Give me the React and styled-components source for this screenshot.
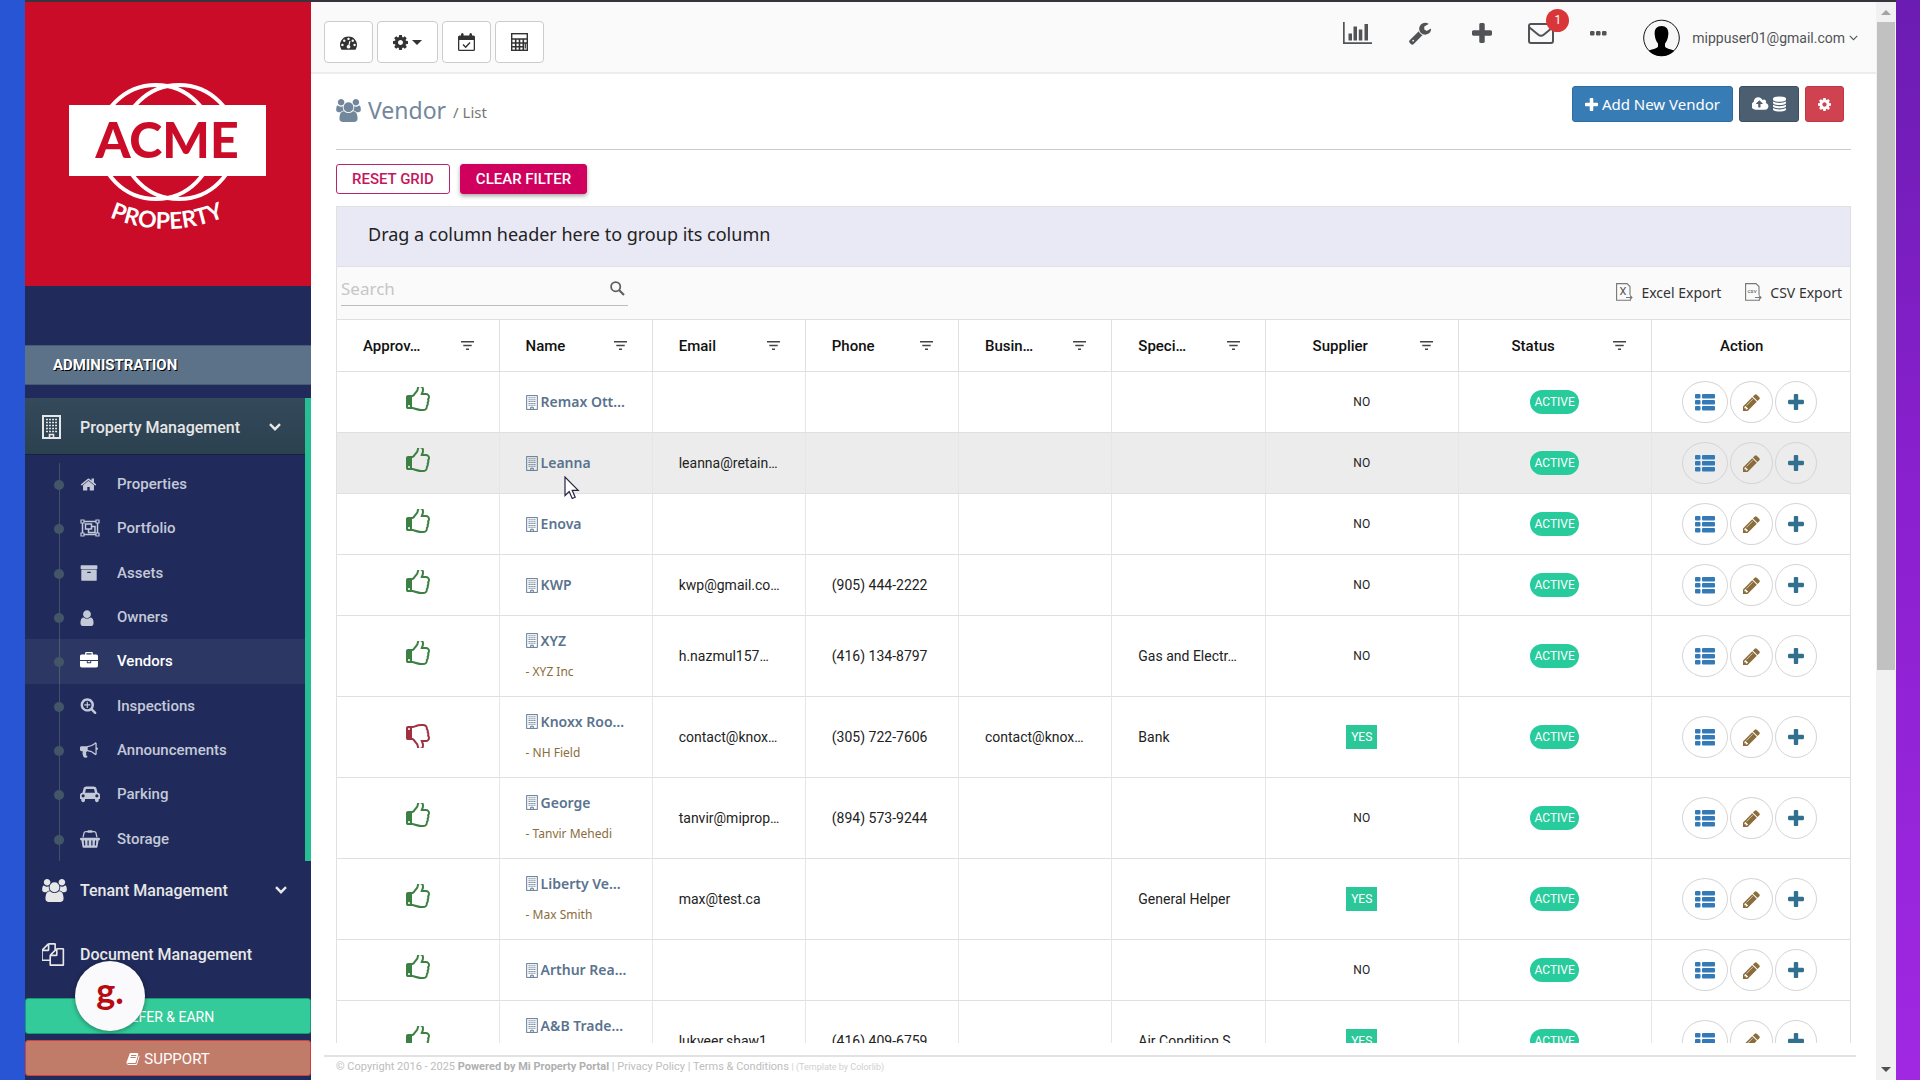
import styled, { createGlobalStyle } from "styled-components";

const GlobalStyle = createGlobalStyle`
  * {
    box-sizing: border-box;
  }
  body {
    margin: 0;
    font-family: Roboto, "Liberation Sans", sans-serif;
    font-size: 14px;
    color: #333;
    overflow: hidden;
  }
  button, input {
    font: inherit;
  }
  a {
    color: inherit;
    text-decoration: none;
  }
  svg {
    display: block;
    flex: none;
  }
`;

const humanist = `"Noto Sans", "Open Sans", sans-serif`;

const Desktop = styled.div`
  height: 100vh;
  padding: 0 24px 0 25px;
  background: linear-gradient(to bottom, #6b1cb2, #8a20cf 45%, #a028e2) right / 50% 100% no-repeat, #2855d3;
`;

const Window = styled.div`
  height: 100%;
  display: flex;
  border-top: 2px solid #38343c;
  background: #fff;
`;

/* ---------- sidebar ---------- */

const Sidebar = styled.aside`
  position: relative;
  width: 286px;
  flex: none;
  display: flex;
  flex-direction: column;
  background: #202b5b;
  color: #e7e7e7;
`;

const LogoPanel = styled.div`
  height: 284px;
  margin-bottom: 59px;
  background: #cb0c28;
`;

const SectionTitle = styled.h3`
  margin: 0 0 13px;
  padding: 1px 28px 0;
  line-height: 37px;
  border-top: 1px solid #49597a;
  border-bottom: 1px solid #49597a;
  background: #5b7289;
  color: #fff;
  font-size: 15px;
  font-weight: 700;
  text-shadow: 1px 1px #000;
`;

const OpenGroup = styled.div`
  border-right: 6px solid #26bf94;
`;

const MenuLink = styled.a`
  display: flex;
  align-items: center;
  height: ${(p) => (p.$active ? "57px" : "64px")};
  padding: ${(p) => (p.$active ? "2px 24px 0 17px" : "0 24px 6px 17px")};
  font-size: 16px;
  font-weight: 500;
  background: ${(p) => (p.$active ? "linear-gradient(#34495a, #2b4150)" : "none")};
  border-bottom: ${(p) => (p.$active ? "1px solid #17233d" : "none")};
  span {
    flex: 1;
    margin-left: 12px;
  }
`;

const IconSlot = styled.i`
  width: 26px;
  flex: none;
  display: flex;
`;

const SubMenu = styled.ul`
  display: grid;
  grid-auto-rows: 1fr;
  min-height: 406px;
  margin: 0;
  padding: 7px 0 0;
  list-style: none;
  background: linear-gradient(#425166, #425166) 34px 8px / 1px 100% no-repeat;
`;

const SubItem = styled.li`
  display: flex;
  align-items: center;
  padding-left: 29px;
  background: ${(p) => (p.$current ? "rgba(255, 255, 255, 0.06)" : "none")};
  color: ${(p) => (p.$current ? "#fff" : "#c4c9d8")};
  font-size: 15px;
  font-weight: 500;
  &::before {
    content: "";
    width: 10px;
    height: 10px;
    margin-top: 2px;
    border-radius: 50%;
    background: #425668;
  }
  a {
    display: flex;
    align-items: center;
    margin-left: 16px;
  }
`;

const SubIcon = styled.i`
  width: 37px;
`;

const SideButtons = styled.div`
  margin-top: auto;
  padding-bottom: 4px;
  display: grid;
  gap: 6px;
`;

const SideButton = styled.button`
  display: flex;
  align-items: center;
  justify-content: center;
  gap: 4px;
  height: 36px;
  padding: 2px 0 0;
  border: 1px solid ${(p) => (p.$kind === "support" ? "#d1403f" : "#169f73")};
  border-radius: 3px;
  background: ${(p) => (p.$kind === "support" ? "#c17b69" : "#33cb99")};
  color: #fff;
  font-size: ${(p) => (p.$kind === "support" ? "15px" : "14px")};
`;

const HelpBubble = styled.button`
  position: absolute;
  left: 50px;
  bottom: 49px;
  width: 70px;
  height: 70px;
  padding: 0 0 12px;
  border: none;
  border-radius: 50%;
  background: #fafafc;
  box-shadow: 0 1px 5px rgba(0, 0, 0, 0.4);
  color: #b80a10;
  font: 700 36px/50px Lato, sans-serif;
`;

/* ---------- main column ---------- */

const Main = styled.main`
  flex: 1;
  min-width: 0;
  display: flex;
  flex-direction: column;
`;

const TopBar = styled.header`
  height: 72px;
  flex: none;
  display: flex;
  justify-content: space-between;
  padding: 0 18px 0 13px;
  background: #fafafa;
  border-bottom: 2px solid #ececec;
`;

const ToolButtons = styled.div`
  display: flex;
  gap: 4px;
  padding-top: 19px;
`;

const ToolButton = styled.button`
  display: flex;
  align-items: center;
  justify-content: center;
  gap: 4px;
  height: 42px;
  padding: 0 15px;
  border: 1px solid #ccc;
  border-radius: 4px;
  background: #fff;
  color: #333;
`;

const Caret = styled.span`
  border: 5px solid transparent;
  border-top-color: currentColor;
  border-bottom: 0;
`;

const UserNav = styled.nav`
  display: flex;
  align-items: center;
  padding-bottom: 8px;
  color: #515356;
  a {
    display: flex;
    align-items: center;
  }
`;

const NavIcon = styled.a`
  position: relative;
  margin-right: ${(p) => p.$gap || 36}px;
`;

const Badge = styled.span`
  position: absolute;
  top: -14px;
  right: -15px;
  width: 23px;
  line-height: 23px;
  border-radius: 50%;
  background: #d9363a;
  color: #fff;
  font-size: 12px;
  text-align: center;
`;

const Account = styled.a`
  gap: 4px;
  padding-top: 9px;
  font-size: 14px;
  svg:first-child {
    margin-right: 8px;
  }
`;

const Content = styled.section`
  flex: 1;
  min-height: 0;
  display: flex;
  flex-direction: column;
  padding: 0 25px;
`;

const TitleRow = styled.div`
  height: 76px;
  flex: none;
  display: flex;
  align-items: flex-start;
  justify-content: space-between;
  padding: 12px 7px 0 0;
  border-bottom: 1px solid #ccc;
`;

const Title = styled.h1`
  display: flex;
  align-items: center;
  gap: 7px;
  margin: 3px 0 0;
  color: #73879c;
  font: 400 23px/38px ${humanist};
  small {
    padding-top: 4px;
    color: #777;
    font-size: 15px;
  }
`;

const Actions = styled.div`
  display: flex;
  gap: 6px;
`;

const ActionButton = styled.button`
  display: flex;
  align-items: center;
  gap: 4px;
  height: 36px;
  padding: 0 12px;
  border: 1px solid ${(p) => p.$edge};
  border-radius: 3px;
  background: ${(p) => p.$bg};
  color: #fff;
  font: 400 15px ${humanist};
`;

const FilterRow = styled.div`
  display: flex;
  gap: 10px;
  padding: 14px 0 12px;
`;

const FilterButton = styled.button`
  height: 30px;
  padding: 0 15px;
  border: 1px solid ${(p) => (p.$filled ? "#d0005e" : "#b5266c")};
  border-radius: 3px;
  background: ${(p) => (p.$filled ? "#d0005e" : "#fff")};
  color: ${(p) => (p.$filled ? "#fff" : "#c2185b")};
  box-shadow: ${(p) => (p.$filled ? "0 2px 4px rgba(0, 0, 0, 0.35)" : "none")};
  font-size: 15px;
  font-weight: 500;
`;

const Grid = styled.div`
  flex: 1;
  min-height: 0;
  overflow: hidden;
  border: 1px solid #e0e0e0;
  border-bottom: 0;
`;

const GroupDrop = styled.div`
  height: 60px;
  padding: 0 31px;
  background: #e9e9f5;
  border-bottom: 1px solid #e0e0e0;
  color: #222;
  font: 400 18px/54px ${humanist};
`;

const GridTools = styled.div`
  height: 52px;
  display: flex;
  align-items: center;
  gap: 24px;
  padding: 0 8px 2px 4px;
  background: #fafafa;
`;

const Search = styled.label`
  width: 287px;
  height: 38px;
  margin-right: auto;
  margin-bottom: 10px;
  display: flex;
  align-items: center;
  padding: 4px 3px 0 0;
  border-bottom: 1px solid #bdbdbd;
  color: #616161;
  input {
    flex: 1;
    min-width: 0;
    padding: 0;
    border: 0;
    outline: none;
    background: none;
    font: 400 17px ${humanist};
    &::placeholder {
      color: #c6c6c6;
    }
  }
`;

const ExportButton = styled.button`
  display: flex;
  align-items: center;
  gap: 8px;
  padding: 0;
  border: 0;
  background: none;
  color: #333;
  font: 400 14px ${humanist};
`;

const Table = styled.table`
  width: 100%;
  table-layout: fixed;
  border-collapse: separate;
  border-spacing: 0;
  border-top: 1px solid #e0e0e0;
`;

const Th = styled.th`
  height: 52px;
  padding: 0 ${(p) => (p.$plain ? 44 : 25)}px 0 26px;
  border-bottom: 1px solid #e0e0e0;
  border-left: 1px solid #e0e0e0;
  color: #111;
  font-size: 15px;
  font-weight: 500;
  text-align: ${(p) => (p.$center ? "center" : "left")};
  &:first-child {
    border-left: 0;
  }
`;

const HeadCell = styled.div`
  display: flex;
  align-items: center;
  span {
    flex: 1;
    padding-right: ${(p) => (p.$center ? 31 : 0)}px;
    white-space: nowrap;
  }
`;

const Row = styled.tr`
  background: ${(p) => (p.$hover ? "#ececec" : "#fff")};
`;

const Td = styled.td`
  height: ${(p) => (p.$tall ? 81 : 61)}px;
  padding: 0 0 0 ${(p) => (p.$center ? 0 : 26)}px;
  border-bottom: 1px solid #e0e0e0;
  border-left: 1px solid #e6e6e6;
  color: #222;
  white-space: nowrap;
  text-align: ${(p) => (p.$center ? "center" : "left")};
  &:first-child {
    border-left: 0;
  }
`;

const Approval = styled.div`
  display: flex;
  justify-content: center;
  padding-bottom: 5px;
  color: ${(p) => (p.$ok ? "#3c8143" : "#a03141")};
`;

const VendorName = styled.a`
  display: flex;
  align-items: center;
  gap: 3px;
  && {
    color: #5a738e;
  }
  font: 600 14px/20px ${humanist};
`;

const Company = styled.div`
  height: 31px;
  padding-top: 11px;
  color: #8a6d3b;
  font: 400 12px/20px ${humanist};
`;

const Supplier = styled.span`
  display: inline-block;
  padding: 0 5px;
  line-height: 24px;
  font-size: 12px;
  background: ${(p) => (p.$yes ? "#2bc798" : "none")};
  color: ${(p) => (p.$yes ? "#fff" : "#222")};
`;

const Status = styled.span`
  display: inline-block;
  padding: 0 4px;
  border-radius: 12px;
  background: #28cb9b;
  color: #fff;
  font-size: 12px;
  line-height: 24px;
`;

const RowActions = styled.div`
  display: flex;
  justify-content: center;
  gap: 2px;
  padding-right: 3px;
`;

const RoundButton = styled.button`
  display: flex;
  align-items: center;
  height: 42px;
  padding: 0 12px;
  border: 1px solid #d5d5d5;
  border-radius: 50%;
  background: none;
  color: ${(p) => p.$color};
`;

const Footer = styled.footer`
  margin: 12px 20px 0 13px;
  padding: 1px 12px 0;
  height: 25px;
  border-top: 2px solid #e2e2e2;
  color: #bdbdbd;
  font-size: 11px;
  line-height: 18px;
  b {
    color: #b0b0b0;
  }
  small {
    font-size: 9px;
    color: #d0d0d0;
  }
`;

/* ---------- window scroll bar ---------- */

const ScrollTrack = styled.div`
  width: 20px;
  flex: none;
  display: flex;
  flex-direction: column;
  align-items: center;
  padding: 8px 1px;
  background: #f1f1f1;
`;

const Arrow = styled.span`
  border: 5px solid transparent;
  ${(p) => (p.$down ? "border-top-color: #505050; border-bottom: 0;" : "border-bottom-color: #a3a3a3; border-top: 0;")}
`;

const Thumb = styled.div`
  width: 18px;
  height: 61%;
  margin: 7px 0 auto;
  background: #c1c1c1;
`;

const Pointer = styled.svg`
  position: absolute;
  left: 564px;
  top: 476px;
`;

/* ---------- icons ---------- */

const glyphs = {
  thumb:
    "M384 1344q0-26-19-45t-45-19-45 19-19 45 19 45 45 19 45-19 19-45zm1152-576q0-51-39-89.5t-89-38.5h-352q0-58 48-159.5t48-160.5q0-98-32-145t-128-47q-26 26-38 85t-30.5 125.5-59.5 109.5q-22 23-77 91-4 5-23 30t-31.5 41-34.5 42.5-40 44-38.5 35.5-40 27-35.5 9h-32v640h32q13 0 31.5 3t33 6.5 38 11 35 11.5 35.5 12.5 29 10.5q211 73 342 73h121q192 0 192-167 0-26-5-56 30-16 47.5-52.5t17.5-73.5-18-69q53-50 53-119 0-25-10-55.5t-25-47.5q32-1 53.5-47t21.5-81zm128-1q0 89-49 163 9 33 9 69 0 77-38 144 3 21 3 43 0 101-60 178 1 139-85 219.5t-227 80.5h-129q-96 0-189.5-22.5t-216.5-65.5q-116-40-138-40h-288q-53 0-90.5-37.5t-37.5-90.5v-640q0-53 37.5-90.5t90.5-37.5h274q36-24 137-155 58-75 107-128 24-25 35.5-85.5t30.5-126.5 62-108q39-37 90-37 84 0 151 32.5t102 101.5 35 186q0 93-48 192h176q104 0 180 76t76 179z",
  users:
    "M593 896q-162 5-265 128h-134q-82 0-138-40.5t-56-118.5q0-353 124-353 6 0 43.5 21t97.5 42.5 119 21.5q67 0 133-23-5 37-5 66 0 139 81 256zm1071 637q0 120-73 189.5t-194 69.5h-874q-121 0-194-69.5t-73-189.5q0-53 3.5-103.5t14-109 26.5-108.5 43-97.5 62-81 85.5-53.5 111.5-20q10 0 43 21.5t73 48 107 48 135 21.5 135-21.5 107-48 73-48 43-21.5q61 0 111.500 20t85.500 53.500 62 81 43 97.500 26.500 108.500 14 109 3.500 103.500zm-1024-1277q0 106-75 181t-181 75-181-75-75-181 75-181 181-75 181 75 75 181zm704 384q0 159-112.500 271.500t-271.500 112.500-271.500-112.500-112.500-271.500 112.500-271.500 271.500-112.500 271.500 112.500 112.500 271.500zm576 225q0 78-56 118.500t-138 40.500h-134q-103-123-265-128 81-117 81-256 0-29-5-66 66 23 133 23 59 0 119-21.500t97.500-42.500 43.500-21q124 0 124 353zm-128-609q0 106-75 181t-181 75-181-75-75-181 75-181 181-75 181 75 75 181z",
  cog: "M1152 896q0-106-75-181t-181-75-181 75-75 181 75 181 181 75 181-75 75-181zm512-109v222q0 12-8 23t-20 13l-185 28q-19 54-39 91 35 50 107 138 10 12 10 25t-9 23q-27 37-99 108t-94 71q-12 0-26-9l-138-108q-44 23-91 38-16 136-29 186-7 28-36 28h-222q-14 0-24.5-8.5t-11.5-21.5l-28-184q-49-16-90-37l-141 107q-10 9-25 9-14 0-25-11-126-114-165-168-7-10-7-23 0-12 8-23 15-21 51-66.5t54-70.5q-27-50-41-99l-183-27q-13-2-21-12.5t-8-23.5v-222q0-12 8-23t19-13l186-28q14-46 39-92-40-57-107-138-10-12-10-24 0-10 9-23 26-36 98.5-107.5t94.5-71.5q13 0 26 10l138 107q44-23 91-38 16-136 29-186 7-28 36-28h222q14 0 24.5 8.5t11.5 21.5l28 184q49 16 90 37l142-107q9-9 24-9 13 0 25 10 129 119 165 170 7 8 7 22 0 12-8 23-15 21-51 66.5t-54 70.5q26 50 41 98l183 28q13 2 21 12.5t8 23.5z",
  plus: "M1600 736v192q0 40-28 68t-68 28h-416v416q0 40-28 68t-68 28h-192q-40 0-68-28t-28-68v-416h-416q-40 0-68-28t-28-68v-192q0-40 28-68t68-28h416v-416q0-40 28-68t68-28h192q40 0 68 28t28 68v416h416q40 0 68 28t28 68z",
  pencil:
    "M491 1536l91-91-235-235-91 91v107h128v128h107zm523-928q0-22-22-22-10 0-17 7l-542 542q-7 7-7 17 0 22 22 22 10 0 17-7l542-542q7-7 7-17zm-54-192l416 416-832 832h-416v-416zm683 96q0 53-37 90l-166 166-416-416 166-165q36-38 90-38 53 0 91 38l235 234q37 39 37 91z",
  home: "M1472 992v480q0 26-19 45t-45 19h-384v-384h-256v384h-384q-26 0-45-19t-19-45v-480q0-1 .5-3t.5-3l575-474 575 474q1 2 1 6zm223-69l-62 74q-8 9-21 11h-3q-13 0-21-7l-692-577-692 577q-12 8-24 7-13-2-21-11l-62-74q-8-10-7-23.5t11-21.5l719-599q32-26 76-26t76 26l244 204v-195q0-14 9-23t23-9h192q14 0 23 9t9 23v408l219 182q10 8 11 21.5t-7 23.5z",
  archive:
    "M1088 832q0-26-19-45t-45-19h-256q-26 0-45 19t-19 45 19 45 45 19h256q26 0 45-19t19-45zm576-192v960q0 26-19 45t-45 19h-1408q-26 0-45-19t-19-45v-960q0-26 19-45t45-19h1408q26 0 45 19t19 45zm64-448v256q0 26-19 45t-45 19h-1536q-26 0-45-19t-19-45v-256q0-26 19-45t45-19h1536q26 0 45 19t19 45z",
  user: "M1536 1399q0 109-62.5 187t-150.5 78h-854q-88 0-150.5-78t-62.5-187q0-85 8.5-160.5t31.5-152 58.5-131 94-89 134.5-34.5q131 128 313 128t313-128q76 0 134.5 34.5t94 89 58.5 131 31.5 152 8.5 160.5zm-256-887q0 159-112.5 271.5t-271.5 112.5-271.5-112.5-112.5-271.5 112.5-271.5 271.5-112.5 271.5 112.5 112.5 271.5z",
  briefcase:
    "M640 256h512v-128h-512v128zm1152 640v480q0 66-47 113t-113 47h-1472q-66 0-113-47t-47-113v-480h672v160q0 26 19 45t45 19h320q26 0 45-19t19-45v-160h672zm-768 0v128h-256v-128h256zm768-480v384h-1792v-384q0-66 47-113t113-47h352v-160q0-40 28-68t68-28h576q40 0 68 28t28 68v160h352q66 0 113 47t47 113z",
  zoom: "M1088 800v64q0 13-9.5 22.5t-22.5 9.5h-224v224q0 13-9.5 22.5t-22.5 9.5h-64q-13 0-22.5-9.5t-9.5-22.5v-224h-224q-13 0-22.5-9.5t-9.5-22.5v-64q0-13 9.5-22.5t22.5-9.5h224v-224q0-13 9.5-22.5t22.5-9.5h64q13 0 22.5 9.5t9.5 22.5v224h224q13 0 22.5 9.5t9.5 22.5zm128 32q0-185-131.5-316.5t-316.5-131.5-316.5 131.5-131.5 316.5 131.5 316.5 316.5 131.5 316.5-131.5 131.5-316.5zm512 832q0 53-37.5 90.5t-90.5 37.5q-54 0-90-38l-343-342q-179 124-399 124-143 0-273.5-55.5t-225-150-150-225-55.5-273.5 55.5-273.5 150-225 225-150 273.5-55.5 273.5 55.5 225 150 150 225 55.5 273.5q0 220-124 399l343 343q37 37 37 90z",
  bullhorn:
    "M1664 640q53 0 90.5 37.5t37.5 90.5-37.5 90.5-90.5 37.5v384q0 52-38 90t-90 38q-417-347-812-380-58 19-91 66t-31 100.5 40 92.5q-20 33-23 65.5t6 58 33.5 55 48 50 61.5 50.5q-29 58-111.5 83t-168.5 11.5-132-55.5q-7-23-29.5-87.5t-32-94.5-23-89-15-101 3.5-98.5 22-110.5h-122q-66 0-113-47t-47-113v-192q0-66 47-113t113-47h480q435 0 896-384 52 0 90 38t38 90v384zm-128 604v-954q-394 302-768 343v270q377 42 768 341z",
  car: "M480 1088q0-66-47-113t-113-47-113 47-47 113 47 113 113 47 113-47 47-113zm36-320h1016l-89-357q-2-8-14-17.5t-21-9.5h-768q-9 0-21 9.5t-14 17.5zm1372 320q0-66-47-113t-113-47-113 47-47 113 47 113 113 47 113-47 47-113zm160-96v384q0 14-9 23t-23 9h-96v128q0 80-56 136t-136 56-136-56-56-136v-128h-1024v128q0 80-56 136t-136 56-136-56-56-136v-128h-96q-14 0-23-9t-9-23v-384q0-93 65.5-158.5t158.5-65.5h28l105-419q23-94 104-157.5t179-63.5h768q98 0 179 63.5t104 157.5l105 419h28q93 0 158.5 65.5t65.5 158.5z",
  basket:
    "M1920 768q53 0 90.5 37.5t37.5 90.5-37.5 90.5-90.5 37.5h-15l-115 662q-8 46-44 76t-82 30h-1280q-46 0-82-30t-44-76l-115-662h-15q-53 0-90.5-37.5t-37.5-90.5 37.5-90.5 90.5-37.5h1792zm-1435 800q26-2 43.5-22.5t15.5-46.5l-32-416q-2-26-22.5-43.5t-46.5-15.5-43.5 22.5-15.5 46.5l32 416q2 25 20.5 42t43.5 17h5zm411-64v-416q0-26-19-45t-45-19-45 19-19 45v416q0 26 19 45t45 19 45-19 19-45zm384 0v-416q0-26-19-45t-45-19-45 19-19 45v416q0 26 19 45t45 19 45-19 19-45zm352 5l32-416q2-26-15.5-46.5t-43.5-22.5-46.5 15.5-22.5 43.5l-32 416q-2 26 15.5 46.5t43.5 22.5h5q25 0 43.5-17t20.5-42zm-1156-1217l-93 412h-132l101-441q19-88 89-143.5t160-55.5h167q0-26 19-45t45-19h384q26 0 45 19t19 45h167q90 0 160 55.5t89 143.5l101 441h-132l-93-412q-11-44-45.5-72t-79.5-28h-167q0 26-19 45t-45 19h-384q-26 0-45-19t-19-45h-167q-45 0-79.5 28t-45.5 72z",
  files:
    "M1632 384q40 0 68 28t28 68v1216q0 40-28 68t-68 28h-960q-40 0-68-28t-28-68v-288h-544q-40 0-68-28t-28-68v-672q0-40 20-88t48-76l408-408q28-28 76-48t88-20h416q40 0 68 28t28 68v328q68-40 128-40h416zm-544 213l-299 299h299v-299zm-640-384l-299 299h299v-299zm196 647l316-316v-416h-384v416q0 40-28 68t-68 28h-416v640h512v-256q0-40 20-88t48-76zm956 804v-1152h-384v416q0 40-28 68t-68 28h-416v640h896z",
  book: "M1703 478q40 57 18 129l-275 906q-19 64-76.5 107.5t-122.5 43.5h-923q-77 0-148.5-53.5t-99.5-131.5q-24-67-2-127 0-4 3-27t4-37q1-8-3-21.5t-3-19.5q2-11 8-21t16.5-23.5 16.5-23.5q23-38 45-91.5t30-91.5q3-10 .5-30t-.5-28q3-11 17-28t17-23q21-36 42-92t25-90q1-9-2.5-32t.5-28q4-13 22-30.5t22-22.5q19-26 42.5-84.5t27.5-96.5q1-8-3-25.5t-2-26.5q2-8 9-18t18-23 17-21q8-12 16.5-30.5t15-35 16-36 19.5-32 26.5-23.5 36-11.5 47.5 5.5l-1 3q38-9 51-9h761q74 0 114 56t18 130l-274 906q-36 119-71.5 153.5t-128.5 34.5h-869q-27 0-38 15-11 16-1 43 24 70 144 70h923q29 0 56-15.5t35-41.5l300-987q7-22 5-57 38 15 59 43zm-1064 2q-4 13 2 22.5t20 9.5h608q13 0 25.5-9.5t16.5-22.5l21-64q4-13-2-22.5t-20-9.5h-608q-13 0-25.5 9.5t-16.5 22.5zm-83 256q-4 13 2 22.5t20 9.5h608q13 0 25.5-9.5t16.5-22.5l21-64q4-13-2-22.5t-20-9.5h-608q-13 0-25.5 9.5t-16.5 22.5z",
  wrench:
    "M448 1472q0-26-19-45t-45-19-45 19-19 45 19 45 45 19 45-19 19-45zm644-420l-682 682q-37 37-90 37-52 0-91-37l-106-108q-38-36-38-90 0-53 38-91l681-681q39 98 114.5 173.5t173.5 114.5zm634-435q0 39-23 106-47 134-164.5 217.5t-258.5 83.5q-185 0-316.5-131.5t-131.5-316.5 131.5-316.5 316.5-131.5q58 0 121.5 16.5t107.5 46.5q16 11 16 28t-16 28l-293 169v224l193 107q5-3 79-48.5t135.5-81 70.5-35.5q15 0 23.5 10t8.5 25z",
  database:
    "M896 768q237 0 443-43t325-127v170q0 69-103 128t-280 93.5-385 34.5-385-34.5-280-93.5-103-128v-170q119 84 325 127t443 43zm0 768q237 0 443-43t325-127v170q0 69-103 128t-280 93.5-385 34.5-385-34.5-280-93.5-103-128v-170q119 84 325 127t443 43zm0-384q237 0 443-43t325-127v170q0 69-103 128t-280 93.5-385 34.5-385-34.5-280-93.5-103-128v-170q119 84 325 127t443 43zm0-1152q208 0 385 34.5t280 93.5 103 128v128q0 69-103 128t-280 93.5-385 34.5-385-34.5-280-93.5-103-128v-128q0-69 103-128t280-93.5 385-34.5z",
  cloud:
    "M1216 864q0-14-9-23l-352-352q-9-9-23-9t-23 9l-351 351q-10 12-10 24 0 14 9 23t23 9h224v352q0 13 9.5 22.5t22.5 9.5h192q13 0 22.5-9.5t9.5-22.5v-352h224q13 0 22.5-9.5t9.5-22.5zm640 288q0 159-112.5 271.5t-271.5 112.5h-1088q-185 0-316.5-131.5t-131.5-316.5q0-130 70-240t188-165q-2-30-2-43 0-212 150-362t362-150q156 0 285.5 87t188.5 231q71-62 166-62 106 0 181 75t75 181q0 76-41 138 130 31 213.5 135.5t83.5 238.5z",
  gauge:
    "M384 1152q0-53-37.5-90.5t-90.5-37.5-90.5 37.5-37.5 90.5 37.5 90.5 90.5 37.5 90.5-37.5 37.5-90.5zm192-448q0-53-37.5-90.5t-90.5-37.5-90.5 37.5-37.5 90.5 37.5 90.5 90.5 37.5 90.5-37.5 37.5-90.5zm428 481l101-382q6-26-7.5-48.5t-38.5-29.5-48 6.5-30 39.5l-101 382q-60 5-107 43.5t-63 98.5q-20 77 20 146t117 89 146-20 89-117q16-60-6-117t-72-91zm660-33q0-53-37.5-90.5t-90.5-37.5-90.5 37.5-37.5 90.5 37.5 90.5 90.5 37.5 90.5-37.5 37.5-90.5zm-640-640q0-53-37.5-90.5t-90.5-37.5-90.5 37.5-37.5 90.5 37.5 90.5 90.5 37.5 90.5-37.5 37.5-90.5zm448 192q0-53-37.5-90.5t-90.5-37.5-90.5 37.5-37.5 90.5 37.5 90.5 90.5 37.5 90.5-37.5 37.5-90.5zm320 448q0 261-141 483-19 29-54 29h-1402q-35 0-54-29-141-221-141-483 0-182 71-348t191-286 286-191 348-71 348 71 286 191 191 286 71 348z",
};

const Glyph = ({ name, w, h, box = "0 0 1792 1792", ...rest }) => (
  <svg width={w} height={h || w} viewBox={box} fill="currentColor" aria-hidden="true" {...rest}>
    <path d={glyphs[name]} />
  </svg>
);

const Building = ({ w, h, frame = 2 }) => (
  <svg width={w} height={h} viewBox="0 0 19 24" fill="none" stroke="currentColor" aria-hidden="true">
    <rect x="1" y="1" width="17" height="22" strokeWidth={frame} />
    <path d="M4 4.500h11M4 7.500h11M4 10.500h11M4 13.500h11M4 16.500h11" strokeWidth="1.700" strokeDasharray="1.900 1.130" />
    <path d="M7.500 23v-3.500h4V23" strokeWidth="1.600" />
  </svg>
);

const ObjectGroup = () => (
  <svg width="20" height="18" viewBox="0 0 20 18" fill="none" stroke="currentColor" strokeWidth="1.5" aria-hidden="true">
    <path d="M2.5 2.5h15v13h-15zM5.5 5h6v5h-6zM12 7.500h3v6H8.500V10.500" />
    <path d="M1 1h3v3H1zM16 1h3v3h-3zM1 14h3v3H1zM16 14h3v3h-3z" strokeWidth="1.2" fill="#202b5b" />
  </svg>
);

const CalendarCheck = () => (
  <svg width="17" height="18" viewBox="0 0 17 18" aria-hidden="true">
    <path fill="currentColor" d="M0 4q0-1.500 1.500-1.500H3V1.500Q3 0 4.300 0T5.600 1.500v1h5.800v-1Q11.400 0 12.700 0T14 1.500v1h1.500Q17 2.500 17 4v12.500Q17 18 15.500 18h-14Q0 18 0 16.500zM1.300 7v9.700h14.400V7z" />
    <path d="M5 11.500l2.700 2.700L12 9.500" fill="none" stroke="currentColor" strokeWidth="1.400" />
  </svg>
);

const Calculator = () => (
  <svg width="17" height="18" viewBox="0 0 17 18" fill="none" stroke="currentColor" aria-hidden="true">
    <rect x=".7" y=".7" width="15.600" height="16.600" strokeWidth="1.400" />
    <path d="M1 6h15M1 10h15M1 13.700h11" strokeWidth="1.600" />
    <path d="M4.700 6v11M8.500 6v11M12.300 6v11" strokeWidth="1.600" />
    <path d="M14.300 10v5.500" strokeWidth="1.200" />
  </svg>
);

const BarChart = () => (
  <svg width="29" height="22" viewBox="0 0 29 22" fill="currentColor" aria-hidden="true">
    <path d="M0 0h1.700v20.300H29V22H0zM5.500 11.500H9v7H5.500zM10.500 4.500H14v14h-3.500zM15.800 7.500h3.500v11h-3.500zM21.500 2H25v16.500h-3.500z" />
  </svg>
);

const Envelope = () => (
  <svg width="26" height="21" viewBox="0 0 26 21" fill="none" stroke="currentColor" strokeWidth="2" aria-hidden="true">
    <rect x="1" y="1" width="24" height="19" rx="2" />
    <path d="M1.500 4.500l8.500 7q3 2.500 6 0l8.500-7" />
  </svg>
);

const Ellipsis = () => (
  <svg width="17" height="5" viewBox="0 0 17 5" fill="currentColor" aria-hidden="true">
    <rect width="4.500" height="4.500" rx="1.200" />
    <rect x="6" width="4.500" height="4.500" rx="1.200" />
    <rect x="12" width="4.500" height="4.500" rx="1.200" />
  </svg>
);

const Avatar = () => (
  <svg width="37" height="38" viewBox="0 0 37 38" aria-hidden="true">
    <defs>
      <clipPath id="face">
        <circle cx="18.500" cy="19" r="18" />
      </clipPath>
    </defs>
    <circle cx="18.500" cy="19" r="17.800" fill="#f7f7f7" stroke="#111" />
    <path
      clipPath="url(#face)"
      d="M18.500 7c5 0 7.300 3.500 6.800 8.500-.3 4.500-1.800 7-3.300 9v3c1 3 11 2.500 13 8l-3 4H5l-3-4c2-5.500 12-5 13-8v-3c-1.500-2-3-4.500-3.300-9C11.200 10.500 13.500 7 18.500 7z"
    />
  </svg>
);

const ListIcon = () => (
  <svg width="20" height="17" viewBox="0 0 20 17" fill="currentColor" aria-hidden="true">
    {[0, 6, 12].map((y) => (
      <g key={y}>
        <rect y={y} width="5.500" height="4.500" rx="1" />
        <rect x="7" y={y} width="13" height="4.500" rx="1" />
      </g>
    ))}
  </svg>
);

const Chevron = ({ w, h, stroke }) => (
  <svg width={w} height={h} viewBox="0 0 12 8" fill="none" stroke="currentColor" strokeWidth={stroke} aria-hidden="true">
    <path d="M1 1.200l5 5 5-5" />
  </svg>
);

const FilterIcon = () => (
  <svg width="13" height="9" viewBox="0 0 13 9" fill="#444" aria-hidden="true">
    <path d="M0 0h13v1.500H0zM2.300 3.700h8.400v1.500H2.300zM5 7.400h3v1.500H5z" />
  </svg>
);

const SearchIcon = () => (
  <svg width="15" height="15" viewBox="0 0 15 15" fill="none" stroke="currentColor" aria-hidden="true">
    <circle cx="5.700" cy="5.700" r="4.600" strokeWidth="1.800" />
    <path d="M9 9l5 5" strokeWidth="2.200" />
  </svg>
);

const ExportIcon = ({ label }) => (
  <svg width="17" height="18" viewBox="0 0 17 18" fill="none" stroke="#777" aria-hidden="true">
    <path d="M15 17.300H.6V.6H11l3 3V12M10 14.500h6M14 12.500l2 2-2 2" strokeWidth="1.100" />
    <text x="7" y={label === "X" ? 12 : 10} textAnchor="middle" fill="#555" stroke="none" fontSize={label === "X" ? 11 : 6} fontFamily="Roboto">
      {label}
    </text>
  </svg>
);

const Logo = () => (
  <svg width="286" height="284" viewBox="25 2 286 284" role="img" aria-label="ACME Property">
    <g fill="none" stroke="#fff" strokeWidth="4">
      <circle cx="156" cy="142" r="57" />
      <circle cx="179" cy="142" r="57" />
    </g>
    <rect x="69" y="105" width="197" height="71" fill="#fff" />
    <text x="167" y="158" textAnchor="middle" fill="#cb0c28" fontFamily="Lato" fontWeight="900" fontSize="50">
      ACME
    </text>
    <path id="arc" d="M103 214a146 146 0 0 0 128 0" fill="none" />
    <text fill="#fff" fontFamily="Lato" fontWeight="700" fontSize="23" textAnchor="middle">
      <textPath href="#arc" startOffset="50%">
        PROPERTY
      </textPath>
    </text>
  </svg>
);

/* ---------- data ---------- */

const subItems = [
  ["Properties", <Glyph name="home" w={17} />],
  ["Portfolio", <ObjectGroup />],
  ["Assets", <Glyph name="archive" w={18} />],
  ["Owners", <Glyph name="user" w={14} h={17} box="256 0 1280 1664" />],
  ["Vendors", <Glyph name="briefcase" w={18} />],
  ["Inspections", <Glyph name="zoom" w={17} />],
  ["Announcements", <Glyph name="bullhorn" w={18} />],
  ["Parking", <Glyph name="car" w={20} h={18} box="0 0 2048 1792" />],
  ["Storage", <Glyph name="basket" w={20} h={18} box="0 0 2048 1792" />],
];

const columns = [
  { label: "Approv…", width: "10.68%" },
  { label: "Name", width: "10.12%" },
  { label: "Email", width: "10.12%" },
  { label: "Phone", width: "10.12%" },
  { label: "Busin…", width: "10.14%" },
  { label: "Speci…", width: "10.14%" },
  { label: "Supplier", width: "12.76%", center: true },
  { label: "Status", width: "12.74%", center: true },
  { label: "Action", width: "13.18%", center: true, plain: true },
];

const vendors = [
  { name: "Remax Ott…" },
  { name: "Leanna", email: "leanna@retain…", hover: true },
  { name: "Enova" },
  { name: "KWP", email: "kwp@gmail.co…", phone: "(905) 444-2222" },
  { name: "XYZ", company: "- XYZ Inc", email: "h.nazmul157…", phone: "(416) 134-8797", special: "Gas and Electr…" },
  {
    name: "Knoxx Roo…",
    company: "- NH Field",
    email: "contact@knox…",
    phone: "(305) 722-7606",
    business: "contact@knox…",
    special: "Bank",
    supplier: true,
    rejected: true,
  },
  { name: "George", company: "- Tanvir Mehedi", email: "tanvir@miprop…", phone: "(894) 573-9244" },
  { name: "Liberty Ve…", company: "- Max Smith", email: "max@test.ca", special: "General Helper", supplier: true },
  { name: "Arthur Rea…" },
  {
    name: "A&B Trade…",
    company: "",
    email: "lukveer.shaw1…",
    phone: "(416) 409-6759",
    special: "Air Condition S…",
    supplier: true,
  },
];

const VendorRow = ({ vendor }) => {
  const tall = vendor.company !== undefined;
  return (
    <Row $hover={vendor.hover}>
      <Td $tall={tall} $center>
        <Approval $ok={!vendor.rejected}>
          <Glyph
            name="thumb"
            w={24}
            h={26}
            box="128 128 1536 1664"
            transform={vendor.rejected ? "scale(1 -1)" : undefined}
          />
        </Approval>
      </Td>
      <Td $tall={tall}>
        <VendorName href="#vendor">
          <Building w={12} h={15} frame={1.5} />
          {vendor.name}
        </VendorName>
        {tall && <Company>{vendor.company}</Company>}
      </Td>
      <Td $tall={tall}>{vendor.email}</Td>
      <Td $tall={tall}>{vendor.phone}</Td>
      <Td $tall={tall}>{vendor.business}</Td>
      <Td $tall={tall}>{vendor.special}</Td>
      <Td $tall={tall} $center>
        <Supplier $yes={vendor.supplier}>{vendor.supplier ? "YES" : "NO"}</Supplier>
      </Td>
      <Td $tall={tall} $center>
        <Status>ACTIVE</Status>
      </Td>
      <Td $tall={tall} $center>
        <RowActions>
          <RoundButton $color="#337ab7" aria-label="Details">
            <ListIcon />
          </RoundButton>
          <RoundButton $color="#8a6d3b" aria-label="Edit">
            <Glyph name="pencil" w={17} h={17} box="128 128 1536 1536" />
          </RoundButton>
          <RoundButton $color="#31708f" aria-label="Add">
            <Glyph name="plus" w={16} box="192 128 1408 1408" />
          </RoundButton>
        </RowActions>
      </Td>
    </Row>
  );
};

const App = () => {
  return (
    <Desktop>
      <GlobalStyle />
      <Window>
        <Sidebar>
          <LogoPanel>
            <Logo />
          </LogoPanel>
          <SectionTitle>ADMINISTRATION</SectionTitle>
          <OpenGroup>
            <MenuLink href="#property" $active>
              <IconSlot>
                <Building w={19} h={24} />
              </IconSlot>
              <span>Property Management</span>
              <Chevron w={12} h={8} stroke={2.4} />
            </MenuLink>
            <SubMenu>
              {subItems.map(([label, icon]) => (
                <SubItem key={label} $current={label === "Vendors"}>
                  <a href={"#" + label}>
                    <SubIcon>{icon}</SubIcon>
                    {label}
                  </a>
                </SubItem>
              ))}
            </SubMenu>
          </OpenGroup>
          <MenuLink href="#tenant">
            <IconSlot>
              <Glyph name="users" w={25} h={23} box="0 0 1920 1792" />
            </IconSlot>
            <span>Tenant Management</span>
            <Chevron w={12} h={8} stroke={2.4} />
          </MenuLink>
          <MenuLink href="#documents">
            <IconSlot>
              <Glyph name="files" w={23} />
            </IconSlot>
            <span>Document Management</span>
          </MenuLink>
          <SideButtons>
            <SideButton>REFER &amp; EARN</SideButton>
            <SideButton $kind="support">
              <Glyph name="book" w={14} />
              SUPPORT
            </SideButton>
          </SideButtons>
          <HelpBubble aria-label="Guide">g.</HelpBubble>
        </Sidebar>

        <Main>
          <TopBar>
            <ToolButtons>
              <ToolButton aria-label="Dashboard">
                <Glyph name="gauge" w={17} />
              </ToolButton>
              <ToolButton aria-label="Settings">
                <Glyph name="cog" w={15} box="128 128 1536 1536" />
                <Caret />
              </ToolButton>
              <ToolButton aria-label="Calendar">
                <CalendarCheck />
              </ToolButton>
              <ToolButton aria-label="Calculator">
                <Calculator />
              </ToolButton>
            </ToolButtons>
            <UserNav>
              <NavIcon href="#reports" aria-label="Reports">
                <BarChart />
              </NavIcon>
              <NavIcon href="#tools" aria-label="Tools" $gap={40}>
                <Glyph name="wrench" w={24} />
              </NavIcon>
              <NavIcon href="#add" aria-label="Add">
                <Glyph name="plus" w={20} box="192 128 1408 1408" />
              </NavIcon>
              <NavIcon href="#mail" aria-label="Mail">
                <Envelope />
                <Badge>1</Badge>
              </NavIcon>
              <NavIcon href="#more" aria-label="More">
                <Ellipsis />
              </NavIcon>
              <Account href="#account">
                <Avatar />
                mippuser01@gmail.com
                <Chevron w={9} h={6} stroke={1.4} />
              </Account>
            </UserNav>
          </TopBar>

          <Content>
            <TitleRow>
              <Title>
                <Glyph name="users" w={25} h={23} box="0 0 1920 1792" />
                Vendor <small>/ List</small>
              </Title>
              <Actions>
                <ActionButton $bg="#387cb5" $edge="#2e6da4">
                  <Glyph name="plus" w={13} box="192 128 1408 1408" />
                  Add New Vendor
                </ActionButton>
                <ActionButton $bg="#4b5f71" $edge="#3d4f5f">
                  <Glyph name="cloud" w={17} h={16} box="0 0 1920 1792" />
                  <Glyph name="database" w={13} h={16} box="128 0 1536 1792" />
                </ActionButton>
                <ActionButton $bg="#cf4350" $edge="#c23543" aria-label="Settings">
                  <Glyph name="cog" w={13} box="128 128 1536 1536" />
                </ActionButton>
              </Actions>
            </TitleRow>
            <FilterRow>
              <FilterButton>RESET GRID</FilterButton>
              <FilterButton $filled>CLEAR FILTER</FilterButton>
            </FilterRow>
            <Grid>
              <GroupDrop>Drag a column header here to group its column</GroupDrop>
              <GridTools>
                <Search>
                  <input type="text" placeholder="Search" aria-label="Search" />
                  <SearchIcon />
                </Search>
                <ExportButton>
                  <ExportIcon label="X" />
                  Excel Export
                </ExportButton>
                <ExportButton>
                  <ExportIcon label="csv" />
                  CSV Export
                </ExportButton>
              </GridTools>
              <Table>
                <colgroup>
                  {columns.map((col) => (
                    <col key={col.label} width={col.width} />
                  ))}
                </colgroup>
                <thead>
                  <tr>
                    {columns.map((col) => (
                      <Th key={col.label} $center={col.center} $plain={col.plain}>
                        <HeadCell $center={col.center && !col.plain}>
                          <span>{col.label}</span>
                          {!col.plain && <FilterIcon />}
                        </HeadCell>
                      </Th>
                    ))}
                  </tr>
                </thead>
                <tbody>
                  {vendors.map((vendor) => (
                    <VendorRow key={vendor.name} vendor={vendor} />
                  ))}
                </tbody>
              </Table>
            </Grid>
          </Content>

          <Footer>
            © Copyright 2016 - 2025 <b>Powered by Mi Property Portal</b> | <a href="#privacy">Privacy Policy</a> |{" "}
            <a href="#terms">Terms &amp; Conditions</a> <small>| (Template by Colorlib)</small>
          </Footer>
        </Main>

        <ScrollTrack>
          <Arrow />
          <Thumb />
          <Arrow $down />
        </ScrollTrack>
      </Window>
      <Pointer width="16" height="24" viewBox="0 0 16 24" aria-hidden="true">
        <path d="M1 1v18.500l4.200-4 3 7 3-1.300-3-6.900h6z" fill="#fff" stroke="#2a2440" strokeWidth="1.200" />
      </Pointer>
    </Desktop>
  );
};

export default App;
